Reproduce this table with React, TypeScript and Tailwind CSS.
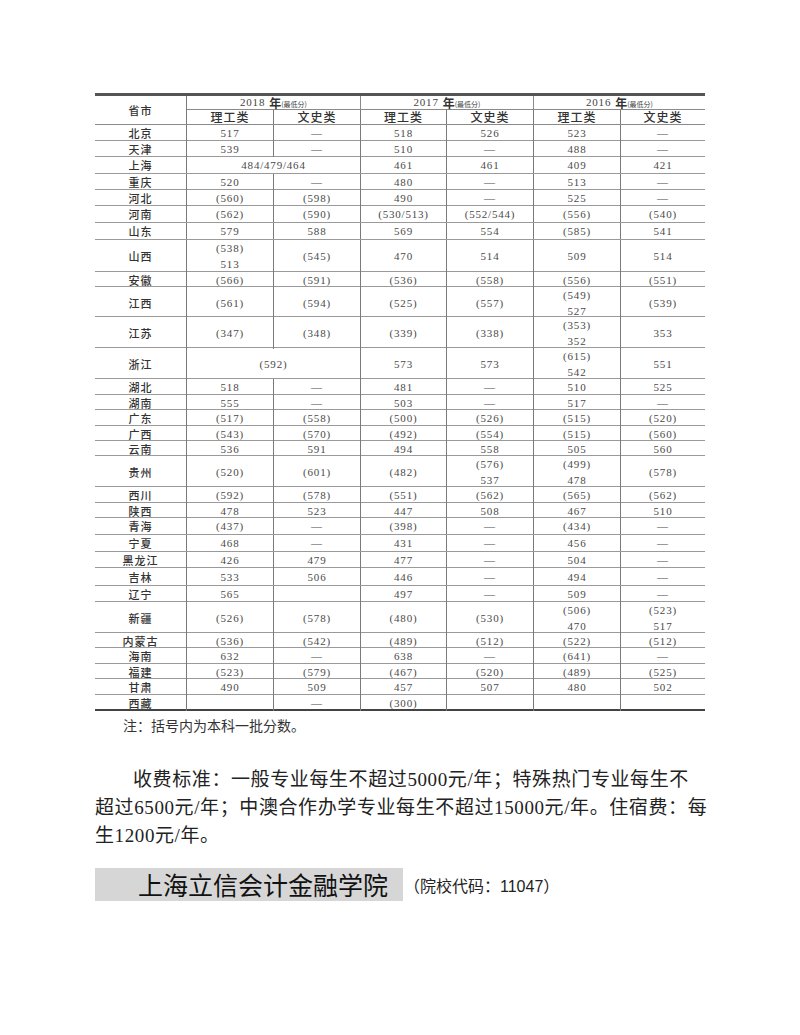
import React from "react";

type Cell = string | string[] | { span: string };
type Row = { p: string; h: string; c: Cell[] };

const COLS = "grid grid-cols-[92px_87px_87px_86px_87px_87px_84px]";

const rows: Row[] = [
  { p: "北京", h: "h-[16px]", c: ["517", "—", "518", "526", "523", "—"] },
  { p: "天津", h: "h-[16px]", c: ["539", "—", "510", "—", "488", "—"] },
  { p: "上海", h: "h-[17px]", c: [{ span: "484/479/464" }, "461", "461", "409", "421"] },
  { p: "重庆", h: "h-[16px]", c: ["520", "—", "480", "—", "513", "—"] },
  { p: "河北", h: "h-[16px]", c: ["(560)", "(598)", "490", "—", "525", "—"] },
  { p: "河南", h: "h-[17px]", c: ["(562)", "(590)", "(530/513)", "(552/544)", "(556)", "(540)"] },
  { p: "山东", h: "h-[17px]", c: ["579", "588", "569", "554", "(585)", "541"] },
  { p: "山西", h: "h-[32px]", c: [["(538)", "513"], "(545)", "470", "514", "509", "514"] },
  { p: "安徽", h: "h-[15px]", c: ["(566)", "(591)", "(536)", "(558)", "(556)", "(551)"] },
  { p: "江西", h: "h-[30px]", c: ["(561)", "(594)", "(525)", "(557)", ["(549)", "527"], "(539)"] },
  { p: "江苏", h: "h-[31px]", c: ["(347)", "(348)", "(339)", "(338)", ["(353)", "352"], "353"] },
  { p: "浙江", h: "h-[31px]", c: [{ span: "(592)" }, "573", "573", ["(615)", "542"], "551"] },
  { p: "湖北", h: "h-[16px]", c: ["518", "—", "481", "—", "510", "525"] },
  { p: "湖南", h: "h-[15px]", c: ["555", "—", "503", "—", "517", "—"] },
  { p: "广东", h: "h-[16px]", c: ["(517)", "(558)", "(500)", "(526)", "(515)", "(520)"] },
  { p: "广西", h: "h-[15px]", c: ["(543)", "(570)", "(492)", "(554)", "(515)", "(560)"] },
  { p: "云南", h: "h-[15px]", c: ["536", "591", "494", "558", "505", "560"] },
  { p: "贵州", h: "h-[31px]", c: ["(520)", "(601)", "(482)", ["(576)", "537"], ["(499)", "478"], "(578)"] },
  { p: "西川", h: "h-[16px]", c: ["(592)", "(578)", "(551)", "(562)", "(565)", "(562)"] },
  { p: "陕西", h: "h-[15px]", c: ["478", "523", "447", "508", "467", "510"] },
  { p: "青海", h: "h-[17px]", c: ["(437)", "—", "(398)", "—", "(434)", "—"] },
  { p: "宁夏", h: "h-[17px]", c: ["468", "—", "431", "—", "456", "—"] },
  { p: "黑龙江", h: "h-[16px]", c: ["426", "479", "477", "—", "504", "—"] },
  { p: "吉林", h: "h-[18px]", c: ["533", "506", "446", "—", "494", "—"] },
  { p: "辽宁", h: "h-[16px]", c: ["565", "", "497", "—", "509", "—"] },
  { p: "新疆", h: "h-[31px]", c: ["(526)", "(578)", "(480)", "(530)", ["(506)", "470"], ["(523)", "517"]] },
  { p: "内蒙古", h: "h-[15px]", c: ["(536)", "(542)", "(489)", "(512)", "(522)", "(512)"] },
  { p: "海南", h: "h-[16px]", c: ["632", "—", "638", "—", "(641)", "—"] },
  { p: "福建", h: "h-[15px]", c: ["(523)", "(579)", "(467)", "(520)", "(489)", "(525)"] },
  { p: "甘肃", h: "h-[16px]", c: ["490", "509", "457", "507", "480", "502"] },
  { p: "西藏", h: "h-[16px]", c: ["", "—", "(300)", "", "", ""] },
];

const numCls =
  "font-['Liberation_Serif','Noto_Sans_CJK_SC',serif] text-[11px] tracking-[0.8px] text-[#4a4a4a] leading-[16px]";
const cjkCls =
  "font-['Noto_Sans_CJK_SC',sans-serif] text-[11px] tracking-[1px] text-[#333] font-medium leading-[14px]";

function renderCell(cell: Cell, idx: number, total: number) {
  const isLast = idx === total - 1;
  const border = isLast ? "" : "border-r border-[#7a7a7a]";
  if (typeof cell === "object" && !Array.isArray(cell)) {
    return (
      <div key={idx} className={`col-span-2 flex items-center justify-center ${border} ${numCls}`}>
        {cell.span}
      </div>
    );
  }
  const lines = Array.isArray(cell) ? cell : [cell];
  return (
    <div key={idx} className={`flex flex-col items-center justify-center ${border} ${numCls}`}>
      {lines.map((l, i) => (
        <span key={i}>{l}</span>
      ))}
    </div>
  );
}

function YearHead({ y, last }: { y: string; last?: boolean }) {
  return (
    <div
      className={`col-span-2 flex items-center justify-center border-b border-[#8a8a8a] ${
        last ? "" : "border-r border-[#7a7a7a]"
      }`}
    >
      <span className="font-['Liberation_Serif',serif] text-[11px] tracking-[0.8px] text-[#444]">{y}</span>
      <span className="ml-[4px] font-['Noto_Sans_CJK_SC',sans-serif] text-[12px] font-semibold text-[#333]">年</span>
      <span className="font-['Noto_Sans_CJK_SC',sans-serif] text-[7px] text-[#444] mt-[3px]">(最低分)</span>
    </div>
  );
}

function SubHead({ t, last }: { t: string; last?: boolean }) {
  return (
    <div
      className={`flex items-center justify-center font-['Noto_Sans_CJK_SC',sans-serif] text-[12px] tracking-[1px] font-medium text-[#333] ${
        last ? "" : "border-r border-[#7a7a7a]"
      }`}
    >
      {t}
    </div>
  );
}

export default function App() {
  return (
    <div className="w-[800px] h-[1035px] bg-white px-[95px] pt-[93px]">
      <div className="w-[610px] border-t-[3px] border-[#555]">
        <div className={`${COLS} grid-rows-[14px_14px] h-[29px] border-b border-[#8a8a8a]`}>
          <div className={`row-span-2 flex items-center justify-center border-r border-[#7a7a7a] ${cjkCls}`}>
            省市
          </div>
          <YearHead y="2018" />
          <YearHead y="2017" />
          <YearHead y="2016" last />
          <SubHead t="理工类" />
          <SubHead t="文史类" />
          <SubHead t="理工类" />
          <SubHead t="文史类" />
          <SubHead t="理工类" />
          <SubHead t="文史类" last />
        </div>
        {rows.map((r, ri) => {
          const last = ri === rows.length - 1;
          return (
            <div
              key={r.p}
              className={`${COLS} ${r.h} ${last ? "border-b-2 border-[#444]" : "border-b border-[#9a9a9a]"}`}
            >
              <div className={`flex items-center justify-center border-r border-[#7a7a7a] ${cjkCls}`}>{r.p}</div>
              {r.c.map((c, i) => renderCell(c, i, r.c.length))}
            </div>
          );
        })}
      </div>

      <div className="mt-[5px] pl-[28px] font-['Noto_Sans_CJK_SC',sans-serif] text-[14px] leading-[18px] text-[#333]">
        注：括号内为本科一批分数。
      </div>

      <div className="mt-[32px] font-['Liberation_Serif','Noto_Sans_CJK_SC',serif] text-[19px] leading-[28px] tracking-[0.6px] text-[#222] whitespace-nowrap">
        <div className="pl-[38px]">收费标准：一般专业每生不超过5000元/年；特殊热门专业每生不</div>
        <div>超过6500元/年；中澳合作办学专业每生不超过15000元/年。住宿费：每</div>
        <div>生1200元/年。</div>
      </div>

      <div className="mt-[18px] flex items-center">
        <div className="w-[308px] h-[33px] bg-[#d6d6d6] pl-[43px] flex items-center font-['Noto_Sans_CJK_SC',sans-serif] text-[25px] leading-[33px] text-[#111]">
          上海立信会计金融学院
        </div>
        <div className="ml-[1px] mt-[4px] font-['Liberation_Sans','Noto_Sans_CJK_SC',sans-serif] text-[16px] leading-[20px] text-[#222]">
          （院校代码：11047）
        </div>
      </div>
    </div>
  );
}
